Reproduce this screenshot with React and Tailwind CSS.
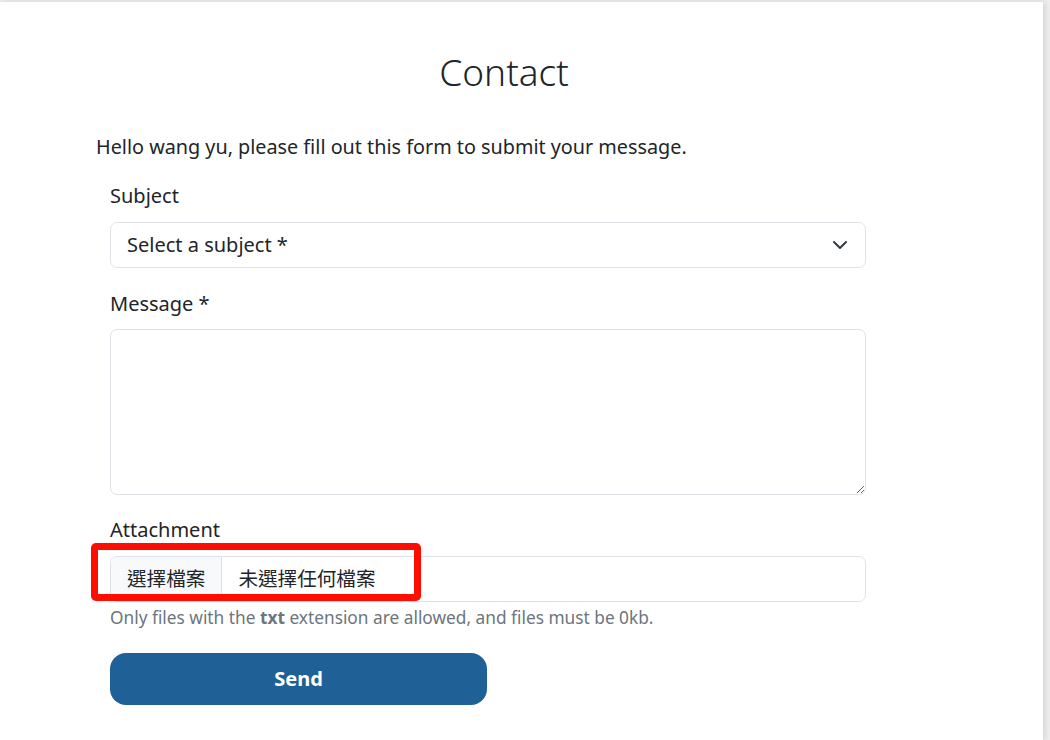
import React from 'react';

const font = { fontFamily: '"Noto Sans", "Noto Sans CJK TC", sans-serif' };

export default function App() {
  return (
    <div className="h-[740px] w-[1050px] overflow-hidden bg-[#eeeeee] pt-[2px]" style={font}>
      <div className="relative h-[738px] w-[1043px] bg-white shadow-[2px_0_6px_rgba(0,0,0,0.12)]">
        <div className="pl-[96px] pr-[131px] pt-[46px] text-[#212529]">
          {/* Title */}
          <h1 className="text-center text-[37px] font-light leading-[48px] text-[#212529]">Contact</h1>

          <p className="mt-[36px] text-[19.8px] leading-[30px]">
            Hello wang yu, please fill out this form to submit your message.
          </p>

          {/* Form */}
          <form className="ml-[14px] w-[756px]">
            <label className="mt-[19px] block text-[20px] leading-[30px]">Subject</label>
            <div className="mt-[11px] flex h-[46px] items-center justify-between rounded-[7px] border border-[#dee2e6] pl-[16px] pr-[16px]">
              <span className="text-[20px] leading-[30px]">Select a subject *</span>
              <svg width="16" height="16" viewBox="0 0 16 16" className="mr-[1px]">
                <path d="m2 5 6 6 6-6" fill="none" stroke="#343a40" strokeWidth="2" strokeLinecap="round" strokeLinejoin="round" />
              </svg>
            </div>

            <label className="mt-[21px] block text-[20px] leading-[30px]">Message *</label>
            <textarea className="mt-[10px] block h-[166px] w-full rounded-[7px] border border-[#dee2e6] outline-none" />

            <label className="mt-[20px] block text-[20px] leading-[30px]">Attachment</label>
            <div className="mt-[11px] flex h-[46px] items-stretch overflow-hidden rounded-[7px] border border-[#dee2e6] text-[19.6px]">
              <div className="flex items-center border-r border-[#dee2e6] bg-[#f8f9fa] px-[16px]">選擇檔案</div>
              <div className="flex items-center pl-[16px]">未選擇任何檔案</div>
            </div>
            <p className="mt-[3px] text-[17.3px] leading-[26px] text-[#6c757d]">
              Only files with the <b className="font-bold">txt</b> extension are allowed, and files must be 0kb.
            </p>

            <button type="button" className="mt-[22px] h-[52px] w-[377px] rounded-[16px] bg-[#1f6197] text-[20px] font-bold text-white">
              Send
            </button>
          </form>
        </div>

        {/* Annotation highlight */}
        <div className="absolute left-[91px] top-[541px] h-[58px] w-[330px] rounded-[5px] border-[7px] border-[#ff0d00]" />
      </div>
    </div>
  );
}
